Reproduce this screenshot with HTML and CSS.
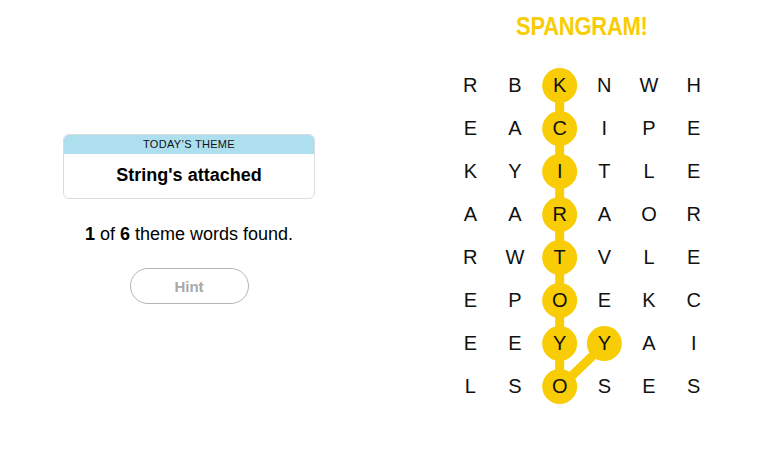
FILE: index.html
```html
<!DOCTYPE html>
<html>
<head>
<meta charset="utf-8">
<link rel="stylesheet" href="styles.css">
</head>
<body>
<div class="page">
  <section class="info">
    <div class="theme-card">
      <div class="theme-label">TODAY’S THEME</div>
      <div class="theme-name">String's attached</div>
    </div>
    <p class="progress"><b>1</b> of <b>6</b> theme words found.</p>
    <button class="hint">Hint</button>
  </section>
  <section class="board">
    <h2 class="status">SPANGRAM!</h2>
    <div class="grid-wrap">
      <svg class="path" width="268" height="345" viewBox="0 0 268 345">
        <g stroke="#f8cd05" stroke-width="9" stroke-linecap="round">
          <line x1="111.67" y1="21.5" x2="111.67" y2="323.5"/>
          <line x1="111.67" y1="323.5" x2="156.33" y2="280.5"/>
        </g>
        <g fill="#f8cd05">
          <circle cx="111.67" cy="21.5" r="17.5"/>
          <circle cx="111.67" cy="64.5" r="17.5"/>
          <circle cx="111.67" cy="107.5" r="17.5"/>
          <circle cx="111.67" cy="150.5" r="17.5"/>
          <circle cx="111.67" cy="193.5" r="17.5"/>
          <circle cx="111.67" cy="236.5" r="17.5"/>
          <circle cx="111.67" cy="279.5" r="17.5"/>
          <circle cx="111.67" cy="322.5" r="17.5"/>
          <circle cx="156.33" cy="279.5" r="17.5"/>
        </g>
      </svg>
      <div class="grid">
        <span>R</span><span>B</span><span>K</span><span>N</span><span>W</span><span>H</span>
        <span>E</span><span>A</span><span>C</span><span>I</span><span>P</span><span>E</span>
        <span>K</span><span>Y</span><span>I</span><span>T</span><span>L</span><span>E</span>
        <span>A</span><span>A</span><span>R</span><span>A</span><span>O</span><span>R</span>
        <span>R</span><span>W</span><span>T</span><span>V</span><span>L</span><span>E</span>
        <span>E</span><span>P</span><span>O</span><span>E</span><span>K</span><span>C</span>
        <span>E</span><span>E</span><span>Y</span><span>Y</span><span>A</span><span>I</span>
        <span>L</span><span>S</span><span>O</span><span>S</span><span>E</span><span>S</span>
      </div>
    </div>
  </section>
</div>
</body>
</html>
```
FILE: styles.css
```css
* { box-sizing: border-box; }
html, body {
  margin: 0;
  padding: 0;
  background: #fff;
  font-family: "Liberation Sans", Arial, sans-serif;
  color: #000;
}
.page {
  display: flex;
  width: 769px;
  height: 467px;
}
.info {
  width: 378px;
  display: flex;
  flex-direction: column;
  align-items: center;
  padding-top: 134px;
}
.theme-card {
  width: 252px;
  border: 1px solid #dcdcdc;
  border-radius: 6px;
  overflow: hidden;
  text-align: center;
}
.theme-label {
  background: #aedfee;
  font-size: 11px;
  letter-spacing: 0.3px;
  line-height: 19px;
  height: 19px;
  color: #111;
}
.theme-name {
  font-weight: 700;
  font-size: 18px;
  line-height: 20px;
  padding: 11px 0 13px;
}
.progress {
  margin: 23px 0 0;
  font-size: 18px;
  line-height: 24px;
}
.hint {
  margin-top: 22px;
  width: 119px;
  height: 36px;
  border: 1px solid #b5b5b5;
  border-radius: 18px;
  background: #fff;
  color: #a8a8a8;
  font-family: "Liberation Sans", Arial, sans-serif;
  font-weight: 700;
  font-size: 15px;
}
.board {
  flex: 1;
  display: flex;
  flex-direction: column;
  align-items: center;
  padding-left: 17px;
}
.status {
  margin: 12px 0 0;
  height: 28px;
  line-height: 28px;
  font-size: 25px;
  font-weight: 700;
  color: #f8cd05;
  transform: scaleX(0.88);
  letter-spacing: -0.3px;
}
.grid-wrap {
  position: relative;
  margin-top: 24px;
  width: 268px;
  height: 345px;
}
.path {
  position: absolute;
  left: 0;
  top: 0;
}
.grid {
  position: relative;
  display: grid;
  grid-template-columns: repeat(6, 1fr);
  grid-auto-rows: 43px;
}
.grid span {
  display: flex;
  align-items: center;
  justify-content: center;
  font-size: 20px;
  color: #111;
}
```
